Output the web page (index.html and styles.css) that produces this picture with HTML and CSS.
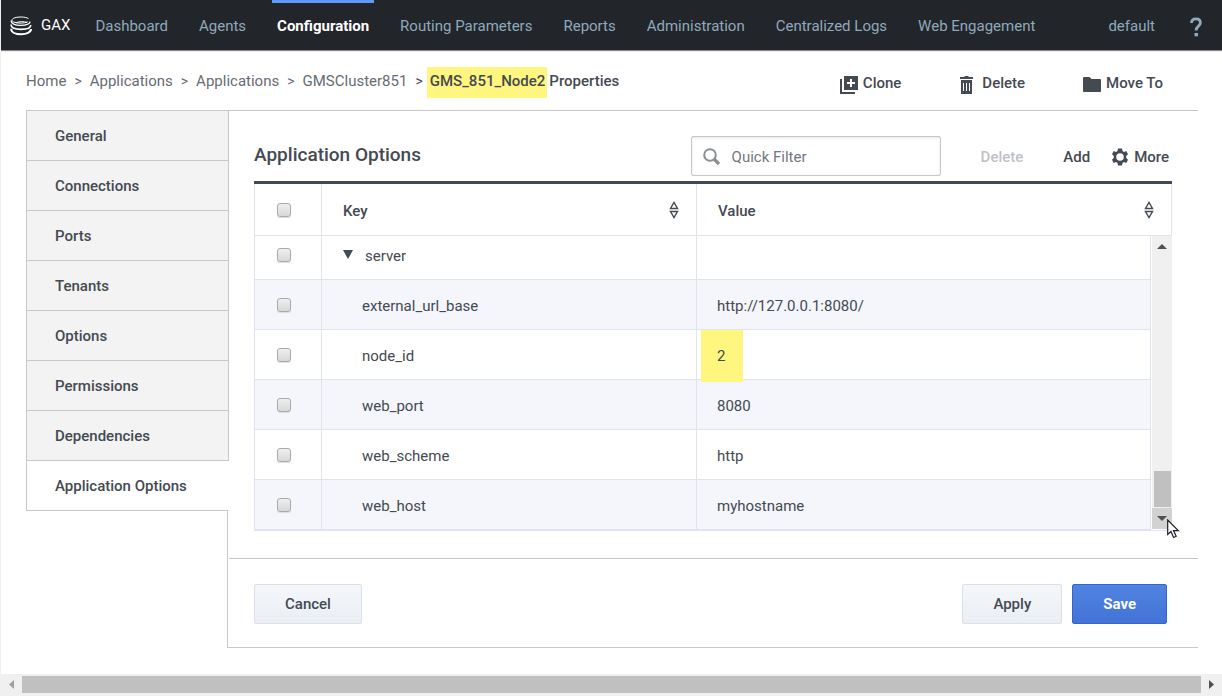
FILE: index.html
```html
<!DOCTYPE html>
<html lang="en">
<head>
    <meta charset="UTF-8">
    <meta name="viewport" content="width=device-width, initial-scale=1.0">
    <title>GAX</title>
    <link rel="stylesheet" href="styles.css">
</head>
<body>
    <header class="topbar">
        <a class="brand" href="#">
            <svg width="22" height="20" viewBox="0 0 22 20" fill="none" stroke="#fff">
                <path d="M18.500 2.600C15.500 .6 7 .4 3.400 2.400 1.500 3.500 1.500 5 3.600 6c3.800 1.600 11 1.500 14.200-.2" stroke-width="1"/>
                <path d="M1.200 4.500C1 7.600 5 9.300 10.500 9.300c5 0 9.500-1.300 9.500-3.800" stroke-width="1.300"/>
                <path d="M1 8.500c0 3.200 4.500 4.900 10 4.900s9.800-1.600 9.800-4.400" stroke-width="1.600"/>
                <path d="M1.200 12.700c0 3.700 4.500 5.600 9.900 5.600s9.900-1.900 9.900-5.200" stroke-width="2"/>
                <path d="M6 6.800c3-1.500 8-1.500 11-.3" stroke-width="1"/>
            </svg>
            <span>GAX</span>
        </a>
        <nav class="main-nav">
            <a href="#">Dashboard</a>
            <a href="#">Agents</a>
            <a class="active" href="#">Configuration</a>
            <a href="#">Routing Parameters</a>
            <a href="#">Reports</a>
            <a href="#">Administration</a>
            <a href="#">Centralized Logs</a>
            <a href="#">Web Engagement</a>
        </nav>
        <div class="user-nav">
            <a href="#">default</a>
            <a class="help" href="#" aria-label="Help">
                <svg width="12" height="20" viewBox="0 0 12 20">
                    <path d="M1.500 6C1.500 3.200 3.400 1.800 6 1.800s4.400 1.500 4.400 3.900c0 3.400-4.300 3.500-4.300 7.700" fill="none" stroke="#8fa9bd" stroke-width="2.800"/>
                    <rect x="4.500" y="16" width="3.500" height="3.300" fill="#8fa9bd"/>
                </svg>
            </a>
        </div>
    </header>

    <main class="page">
        <div class="page-head">
            <ol class="breadcrumb">
                <li><a href="#">Home</a></li>
                <li><a href="#">Applications</a></li>
                <li><a href="#">Applications</a></li>
                <li><a href="#">GMSCluster851</a></li>
                <li class="current"><mark>GMS_851_Node2</mark>Properties</li>
            </ol>
            <div class="page-actions">
                <button type="button">
                    <svg width="18" height="18" viewBox="0 0 18 18">
                        <path d="M0 3h2v13h13v2H0z"/>
                        <path fill-rule="evenodd" d="M4 0h14v14H4zM10 3v3H7v2h3v3h2V8h3V6h-3V3z"/>
                    </svg>
                    Clone
                </button>
                <button type="button">
                    <svg width="18" height="18" viewBox="0 0 18 18">
                        <path d="M1 1h4.500V0h4v1H14v2H1z"/>
                        <path fill-rule="evenodd" d="M2 4h11v14H2zM4 7v8h1V7zM7 7v8h1V7zM10 7v8h1V7z"/>
                    </svg>
                    Delete
                </button>
                <button type="button">
                    <svg width="18" height="18" viewBox="0 0 18 18">
                        <path d="M0 2q0-1 1-1h5.500l2 2H17q1 0 1 1v11q0 1-1 1H1q-1 0-1-1z"/>
                    </svg>
                    Move To
                </button>
            </div>
        </div>

        <div class="workspace">
            <nav class="side-tabs">
                <a href="#">General</a>
                <a href="#">Connections</a>
                <a href="#">Ports</a>
                <a href="#">Tenants</a>
                <a href="#">Options</a>
                <a href="#">Permissions</a>
                <a href="#">Dependencies</a>
                <a class="active" href="#">Application Options</a>
            </nav>

            <section class="panel">
                <div class="panel-body">
                    <div class="toolbar">
                        <h1>Application Options</h1>
                        <div class="filter">
                            <svg width="18" height="18" viewBox="0 0 18 18" fill="none" stroke="#8b8f94">
                                <circle cx="7" cy="7" r="5.800" stroke-width="2"/>
                                <path d="M11 11l5 5" stroke-width="3.200"/>
                            </svg>
                            <input type="text" placeholder="Quick Filter" aria-label="Quick Filter">
                        </div>
                        <div class="tools">
                            <button type="button" disabled>Delete</button>
                            <button type="button">Add</button>
                            <button class="more" type="button">
                                <svg width="16" height="18" viewBox="0 0 16 18">
                                    <path fill-rule="evenodd" d="M6 .5h4l.5 2.500 1.500.9 2.300-.8 1.700 3.200-1.800 1.600v2.200L16 11.700l-1.700 3.200-2.300-.8-1.500.9-.5 2.500H6L5.500 15l-1.500-.9-2.300.8L0 11.700l1.800-1.600V7.900L0 6.300l1.700-3.200 2.300.8L5.500 3zM8 5.200a3.800 3.800 0 1 0 0 7.600 3.800 3.800 0 0 0 0-7.600z"/>
                                </svg>
                                More
                            </button>
                        </div>
                    </div>

                    <div class="grid">
                        <table class="grid-head">
                            <thead>
                                <tr>
                                    <th class="check"><input type="checkbox" aria-label="Select all"></th>
                                    <th class="key">
                                        <div class="th-inner">Key
                                            <svg class="sort" width="10" height="18" viewBox="0 0 10 18"><path d="M1.500 7.500h7L5 1.500zM1.500 10.500h7L5 16.500z"/></svg>
                                        </div>
                                    </th>
                                    <th>
                                        <div class="th-inner">Value
                                            <svg class="sort" width="10" height="18" viewBox="0 0 10 18"><path d="M1.500 7.500h7L5 1.500zM1.500 10.500h7L5 16.500z"/></svg>
                                        </div>
                                    </th>
                                </tr>
                            </thead>
                        </table>
                        <div class="grid-scroll">
                            <table class="grid-rows">
                                <tbody>
                                    <tr class="group">
                                        <td class="check"><input type="checkbox" aria-label="server"></td>
                                        <td class="key"><svg width="10" height="9" viewBox="0 0 10 9"><path d="M0 0h10L5 9z"/></svg>server</td>
                                        <td></td>
                                    </tr>
                                    <tr>
                                        <td class="check"><input type="checkbox" aria-label="external_url_base"></td>
                                        <td class="key">external_url_base</td>
                                        <td>http://127.0.0.1:8080/</td>
                                    </tr>
                                    <tr>
                                        <td class="check"><input type="checkbox" aria-label="node_id"></td>
                                        <td class="key">node_id</td>
                                        <td><mark>2</mark></td>
                                    </tr>
                                    <tr>
                                        <td class="check"><input type="checkbox" aria-label="web_port"></td>
                                        <td class="key">web_port</td>
                                        <td>8080</td>
                                    </tr>
                                    <tr>
                                        <td class="check"><input type="checkbox" aria-label="web_scheme"></td>
                                        <td class="key">web_scheme</td>
                                        <td>http</td>
                                    </tr>
                                    <tr>
                                        <td class="check"><input type="checkbox" aria-label="web_host"></td>
                                        <td class="key">web_host</td>
                                        <td>myhostname</td>
                                    </tr>
                                </tbody>
                            </table>
                            <div class="vbar">
                                <span class="arrow"><svg width="10" height="5" viewBox="0 0 10 5"><path d="M0 5h10L5 0z"/></svg></span>
                                <span class="thumb"></span>
                                <span class="arrow down"><svg width="10" height="5" viewBox="0 0 10 5"><path d="M0 0h10L5 5z"/></svg></span>
                                <svg class="cursor" width="13" height="20" viewBox="0 0 13 20">
                                    <path d="M.7 1v14.500l3.300-3 2.600 6 2.600-1.200-2.700-5.700h4.800z" fill="#fff" stroke="#1b1b2c" stroke-width="1.200"/>
                                </svg>
                            </div>
                        </div>
                    </div>
                </div>

                <div class="panel-foot">
                    <button class="btn cancel" type="button">Cancel</button>
                    <button class="btn" type="button">Apply</button>
                    <button class="btn primary" type="button">Save</button>
                </div>
            </section>
        </div>
    </main>

    <div class="hbar">
        <svg width="5" height="9" viewBox="0 0 5 9"><path d="M5 0v9L0 4.500z" fill="#a0a0a0"/></svg>
        <span class="thumb"></span>
        <svg width="5" height="9" viewBox="0 0 5 9"><path d="M0 0v9l5-4.500z" fill="#505050"/></svg>
    </div>
</body>
</html>
```
FILE: styles.css
```css
* {
    box-sizing: border-box;
}
body {
    margin: 0;
    min-height: 100vh;
    display: flex;
    flex-direction: column;
    border-left: 1px solid #f0f0f0;
    background: #fff;
    color: #444a52;
    font: 15px/20px Roboto, "Liberation Sans", sans-serif;
}
a {
    color: inherit;
    text-decoration: none;
}
button,
input {
    font: inherit;
    color: inherit;
}
button {
    padding: 0;
    border: 0;
    background: none;
    font-weight: 500;
}
svg {
    display: block;
    flex: none;
    fill: currentColor;
}
mark {
    color: inherit;
    background: #fff67f;
}

/* top bar */
.topbar {
    display: flex;
    height: 50px;
    background: #22252a;
    box-shadow: 0 1px 1px #88898b;
    color: #8fa9bd;
    line-height: 52px;
}
.brand {
    display: flex;
    align-items: center;
    gap: 9px;
    margin: 0 20px 0 9px;
    color: #fff;
}
.brand svg {
    margin-top: 2px;
    fill: none;
}
.main-nav {
    display: flex;
    gap: 21px;
}
.main-nav a {
    padding: 0 5px;
    white-space: nowrap;
}
.main-nav .active {
    color: #fff;
    font-weight: 700;
    box-shadow: inset 0 3px #5e99ff;
}
.user-nav {
    display: flex;
    gap: 35px;
    margin: 0 20px 0 auto;
}
.help {
    display: flex;
    align-items: center;
    padding-top: 3px;
}

/* breadcrumb row */
.page {
    flex: 1;
    padding: 0 24px 26px 25px;
}
.page-head {
    display: flex;
    justify-content: space-between;
    padding: 21px 35px 19px 0;
}
.breadcrumb {
    display: flex;
    margin: 0;
    padding: 0;
    list-style: none;
    color: #666c73;
    white-space: nowrap;
}
.breadcrumb li + li::before {
    content: ">";
    margin: 0 8px;
    font-size: 14px;
}
.breadcrumb .current {
    color: #444a52;
    font-weight: 500;
}
.breadcrumb li.current::before {
    margin-right: 4px;
    font-weight: 400;
}
.breadcrumb mark {
    margin-right: 2px;
    padding: 5px 2px 8px 3px;
}
.page-actions {
    display: flex;
    gap: 58px;
    padding-top: 2px;
}
.page-actions button {
    display: flex;
    gap: 5px;
    height: 18px;
    line-height: 20px;
}
.page-actions svg {
    margin-top: 3px;
}

/* side tabs */
.workspace {
    display: flex;
    border-top: 1px solid #c8c8c8;
}
.side-tabs {
    position: relative;
    z-index: 1;
    width: 203px;
    flex: none;
    align-self: flex-start;
    margin-right: -2px;
    border-left: 1px solid #c8c8c8;
}
.side-tabs a {
    display: block;
    height: 50px;
    padding-left: 28px;
    border: solid #c8c8c8;
    border-width: 0 1px 1px 0;
    background: #f3f3f3;
    font-weight: 500;
    line-height: 50px;
}
.side-tabs .active {
    border-right-color: #fff;
    background: #fff;
}

/* panel */
.panel {
    flex: 1;
    min-width: 0;
    border: solid #c8c8c8;
    border-width: 0 0 1px 1px;
}
.panel-body {
    padding: 25px 26px 27px;
}
.toolbar {
    display: flex;
    align-items: center;
    padding-bottom: 5px;
}
.toolbar h1 {
    flex: 1;
    margin: 0;
    padding-bottom: 3px;
    font-size: 19px;
    font-weight: 500;
}
.filter {
    display: flex;
    align-items: center;
    gap: 11px;
    width: 250px;
    height: 40px;
    padding: 2px 10px 0 11px;
    border: 1px solid #c8c8c8;
    border-radius: 2px;
    box-shadow: inset 0 1px 3px #e6e6e6;
}
.filter svg {
    fill: none;
}
.filter input {
    width: 100%;
    min-width: 0;
    padding: 0;
    border: 0;
    outline: 0;
    background: none;
}
.filter input::placeholder {
    color: #73777c;
}
.tools {
    display: flex;
    gap: 40px;
    margin: 1px 3px 0 40px;
}
.tools button:disabled {
    color: #bfc2c5;
}
.tools .more {
    display: flex;
    align-items: center;
    gap: 6px;
    margin-left: -18px;
}

/* options grid */
.grid {
    border-top: 3px solid #444a52;
    border-bottom: 1px solid #e0e4ec;
}
.grid table {
    width: 100%;
    table-layout: fixed;
    border-collapse: separate;
    border-spacing: 0;
    border-left: 1px solid #e0e4ec;
}
.grid th,
.grid td {
    height: 50px;
    padding: 2px 20px 0;
    border: solid #e0e4ec;
    border-width: 0 1px 1px 0;
    text-align: left;
}
.grid th {
    height: 52px;
    padding-right: 17px;
    font-weight: 500;
}
.grid .check {
    width: 67px;
    padding: 0 0 0 22px;
}
.grid .key {
    width: 375px;
}
.th-inner {
    display: flex;
    justify-content: space-between;
    padding-left: 1px;
}
.sort {
    fill: none;
    stroke: #444a52;
    stroke-width: 1.4;
}
.grid-rows .key {
    padding-left: 40px;
}
.grid-rows .group td {
    height: 44px;
    padding-top: 0;
    padding-bottom: 4px;
}
.grid-rows .group .check {
    padding-bottom: 5px;
}
.grid-rows .group .key {
    padding-left: 21px;
}
.group .key svg {
    display: inline-block;
    margin: 0 12px 2px 0;
}
.grid-rows tr:nth-child(even) {
    background: #f4f6fb;
}
.grid-rows mark {
    margin-left: -16px;
    padding: 17px 18px 17px 16px;
}
.grid input {
    display: block;
    appearance: none;
    width: 14px;
    height: 14px;
    margin: 0;
    border: 1px solid #aaa;
    border-radius: 3px;
    background: linear-gradient(#eee, #d8d8d8);
    box-shadow: 0 1px 1px #ddd;
}
.grid-scroll {
    display: flex;
    gap: 1px;
}
.vbar {
    position: relative;
    display: flex;
    flex: none;
    flex-direction: column;
    justify-content: flex-end;
    width: 20px;
    margin-bottom: 1px;
    background: #f0f0f0;
    color: #505050;
}
.vbar .arrow {
    display: flex;
    align-items: center;
    justify-content: center;
    height: 21px;
}
.vbar .arrow:first-child {
    margin-bottom: auto;
}
.vbar .down {
    background: #d2d2d2;
}
.vbar .thumb {
    height: 36px;
    margin: 0 1px 1px 2px;
    background: #c0c0c0;
}
.cursor {
    position: absolute;
    top: 283px;
    left: 15px;
}

/* form buttons */
.panel-foot {
    display: flex;
    gap: 10px;
    margin-left: 1px;
    padding: 25px 31px 23px 25px;
    border-top: 1px solid #c8c8c8;
}
.btn {
    height: 40px;
    padding: 0 30px;
    border: 1px solid #dbe1e9;
    border-radius: 2px;
    background: linear-gradient(#f4f7fa, #eaeef3);
}
.cancel {
    margin-right: auto;
}
.primary {
    border-color: #2f66d4;
    background: linear-gradient(#5083e2, #4273d5);
    color: #fff;
    font-weight: 700;
}

/* window scrollbar */
.hbar {
    display: flex;
    align-items: center;
    gap: 8px;
    height: 22px;
    padding: 0 8px 1px;
    background: #f0f0f0;
}
.hbar .thumb {
    flex: 1;
    height: 17px;
    background: #c0c0c0;
}
```
